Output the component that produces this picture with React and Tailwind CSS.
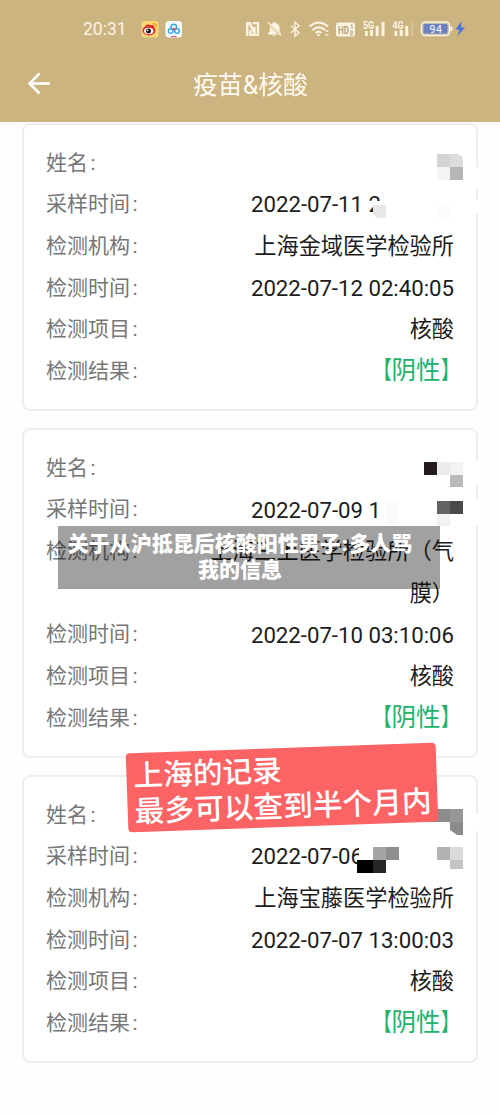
import React from 'react';

const CJK = "font-['Roboto','Noto_Sans_CJK_SC',sans-serif]";

function StatusIcons() {
  return (
    <svg className="absolute left-0 top-0" width="500" height="60" viewBox="0 0 500 60">
      {/* weibo */}
      <rect x="141.500" y="21" width="17" height="16.500" rx="3.500" fill="#fbd774" />
      <ellipse cx="149" cy="30.500" rx="6.500" ry="5" fill="#d9302c" />
      <path d="M146 26.500q2-2 4 0q3-1.500 3.500 1" fill="none" stroke="#d9302c" strokeWidth="2" />
      <ellipse cx="148.700" cy="31" rx="4.600" ry="3.300" fill="#fff" />
      <circle cx="148.500" cy="31" r="2.500" fill="#1d1714" />
      <circle cx="147.700" cy="30.400" r=".8" fill="#fff" />
      <path d="M152.500 23.500q4 0 3.800 4" fill="none" stroke="#f5a52a" strokeWidth="1.500" />
      {/* netdisk */}
      <rect x="165.500" y="21" width="16.500" height="16.500" rx="3.500" fill="#fafdff" />
      <circle cx="173.800" cy="27" r="2.700" fill="none" stroke="#3aa8e0" strokeWidth="1.500" />
      <circle cx="170.700" cy="31" r="2.300" fill="none" stroke="#3aa8e0" strokeWidth="1.500" />
      <circle cx="177" cy="31" r="2.300" fill="none" stroke="#3aa8e0" strokeWidth="1.500" />
      <path d="M172.500 29.800l1.300-1.300 1.300 1.300" fill="none" stroke="#e7526a" strokeWidth="1.500" />
      <path d="M171 37q2.700-1.500 5.500 0" fill="none" stroke="#c45a86" strokeWidth="1.200" />
      {/* nfc */}
      <path d="M247.200 36v-12.800h2.600l4.600 10.300v-6.500" fill="none" stroke="#faf3e2" strokeWidth="2.500" />
      <path d="M250.300 30v4.800h7.700v-11.600h-5.500" fill="none" stroke="#faf3e2" strokeWidth="2.300" />
      <g fill="#faf3e2">
        {/* muted bell */}
        <path d="M274.500 22q1.400 0 1.400 1.300q3.600 1 3.800 5.200v3l1.500 2h-.7l-9.500-9.300q1-.7 2-.9q0-1.300 1.500-1.300z" />
        <path d="M270 26.500l8 8h-10v-1.300l1.700-1.700v-3.500z" />
        <path d="M272.300 35.200h3.500q-1.700 2-3.500 0z" />
      </g>
      <path d="M268 22.500l13 13" stroke="#faf3e2" strokeWidth="1.200" />
      <path d="M291 25.500l8 7.200-4 3.500v-14l4 3.500-8 7" fill="none" stroke="#faf3e2" strokeWidth="1.400" />
      {/* wifi */}
      <g fill="none" stroke="#faf3e2" strokeWidth="2.100">
        <path d="M309.500 26.500q9.300-8 18.600 0" />
        <path d="M312.500 30q6.300-5.200 12.600 0" />
        <path d="M315.500 33q3.300-2.600 6 0" />
      </g>
      <circle cx="318.600" cy="35" r="1.300" fill="#faf3e2" />
      <path d="M325.500 31h3M325.500 34.800h3" stroke="#faf3e2" strokeWidth="1.500" />
      {/* hd */}
      <rect x="336" y="22.500" width="19" height="14" rx="2" fill="#faf3e2" />
      <text x="338" y="33.500" fontSize="10.500" fontWeight="700" textLength="11" lengthAdjust="spacingAndGlyphs" fill="#b9a476" className="font-['Roboto']">HD</text>
      <path d="M350.500 25.500l1.500-1v4.500M350 31.200h2.700v1.700h-2.200v2h2.700" fill="none" stroke="#b9a476" strokeWidth=".9" />
      {/* cellular */}
      <g fill="#faf3e2">
        <text x="363" y="28.500" fontSize="10" fontWeight="700" textLength="11" lengthAdjust="spacingAndGlyphs" className="font-['Roboto']">5G</text>
        <text x="392.500" y="28.500" fontSize="10" fontWeight="700" textLength="11" lengthAdjust="spacingAndGlyphs" className="font-['Roboto']">4G</text>
        <rect x="365" y="31" width="2.700" height="5" />
        <rect x="370" y="30" width="3" height="6" />
        <rect x="375.700" y="26" width="3" height="10" />
        <rect x="381.500" y="22" width="3" height="14" />
        <rect x="394.500" y="31" width="2.700" height="5" />
        <rect x="399.700" y="30" width="3" height="6" />
        <rect x="405.300" y="26" width="3" height="10" />
        <rect x="411" y="22" width="2.500" height="14" opacity=".2" />
      </g>
      {/* battery */}
      <rect x="421.500" y="22" width="28" height="13.500" rx="3.500" fill="#c3bdae" stroke="#faf3e2" strokeWidth="1.500" />
      <rect x="423.500" y="24" width="24" height="9.500" rx="1.500" fill="#6c81bd" />
      <path d="M451.300 26.500v4.500" stroke="#faf3e2" strokeWidth="2" />
      <text x="435.700" y="32.600" textAnchor="middle" fontSize="10.500" textLength="12.500" fill="#fff" className="font-['Roboto']">94</text>
      <path d="M461.500 21.500l-6 8h4l-2 6.500 7.500-8.500h-4z" fill="#4470dc" />
    </svg>
  );
}

function Row({ label, value, masked }) {
  return (
    <div className="flex h-[41.7px] items-center justify-between whitespace-nowrap">
      <span className="text-[21px] text-[#777]">
        {label}
        <span className="ml-[2.500px]">:</span>
      </span>
      {value && (
        <span
          className={
            masked ? 'w-[203px] text-left text-[22.200px] text-[#1c1c1c]' : 'text-[22.200px] text-[#1c1c1c]'
          }
        >
          {value}
        </span>
      )}
    </div>
  );
}

function ResultRow() {
  return (
    <div className="flex h-[41.7px] items-center justify-between whitespace-nowrap">
      <span className="text-[21px] text-[#777]">
        检测结果<span className="ml-[2.500px]">:</span>
      </span>
      <span className="mr-[-11px] flex text-[24.500px] text-[#20b26b]">
        <span className="origin-right scale-x-75">【</span>
        <span>阴性</span>
        <span className="origin-left scale-x-75">】</span>
      </span>
    </div>
  );
}

function Card({ sample, org, orgRest, time }) {
  return (
    <section className="rounded-[8px] border-2 border-[#eeeeee] bg-white pt-[17.500px] pr-[22px] pb-[16.500px] pl-[22px]">
      <Row label="姓名" />
      <Row label="采样时间" value={sample} masked />
      <Row label="检测机构" value={org} />
      {orgRest && (
        <div className="flex h-[41.7px] items-center justify-end text-[22.200px] text-[#1c1c1c]">{orgRest}</div>
      )}
      <Row label="检测时间" value={time} />
      <Row label="检测项目" value="核酸" />
      <ResultRow />
    </section>
  );
}

function Mosaic() {
  return (
    <svg className="absolute left-0 top-0" width="500" height="1116" viewBox="0 0 500 1116">
      <g fill="#fff">
        <rect x="474" y="167" width="8" height="21" />
        <rect x="474" y="200" width="8" height="14" />
        <path d="M380 190h30v28h-37v-13l4-4h3z" />
        <rect x="474" y="461" width="8" height="24" />
        <rect x="474" y="499" width="8" height="27" />
        <rect x="474" y="814" width="8" height="17" />
        <rect x="359" y="845" width="60" height="28" />
      </g>
      <path d="M437 154h13v13h-13z" fill="#d4d3d5" />
      <path d="M450 154h7q6 1 6 6v7h-13z" fill="#dddcde" />
      <path d="M437 167h13v13h-8q-5-1-5-5z" fill="#f5f3f5" />
      <path d="M450 167h13v13h-13z" fill="#b7b5b8" />
      <path d="M373 205h13v13h-8q-4-1-5-5z" fill="#e7e7e7" />
      <path d="M438 206h12v12h-12z" fill="#fafbfa" />
      <path d="M424 462h13v13h-13z" fill="#231b1f" />
      <path d="M437 462h13v13h-13z" fill="#ececec" />
      <path d="M450 462h13v13h-13z" fill="#f1f4f2" />
      <path d="M450 475h13v12h-13z" fill="#b9b9bb" />
      <path d="M437 501h13v13h-13z" fill="#636363" />
      <path d="M450 501h13v13h-13z" fill="#4a4a4a" />
      <path d="M437 514h13v12h-13z" fill="#f0f3f0" />
      <path d="M387 502h11v22h-11z" fill="#fafafa" />
      <path d="M428 809h22v13h-22z" fill="#8c8c8c" />
      <path d="M450 809h13v13h-13z" fill="#979797" />
      <path d="M450 822h13v13h-6l-7-5z" fill="#8b8b8b" />
      <path d="M373 847h13v13h-13z" fill="#a5a5a5" />
      <path d="M386 847h13v13h-13z" fill="#8e8e8e" />
      <path d="M357 860h16v13h-16z" fill="#000" />
      <path d="M373 860h13v13h-13z" fill="#262626" />
      <path d="M437 847h13v13h-13z" fill="#b2b2b2" />
      <path d="M450 847h13v13h-13z" fill="#dadada" />
      <path d="M450 860h13v9h-13z" fill="#c4c4c4" />
    </svg>
  );
}

export default function App() {
  return (
    <div className={`relative h-[1116px] w-[500px] overflow-hidden bg-[#fefefe] ${CJK}`}>
      <header className="relative flex h-[122px] flex-col bg-[#ccb480] text-[#fffaf0]">
        <div className="flex h-[58px] items-center pl-[83px] text-[17.500px] text-[#faf3e2]">20:31</div>
        <StatusIcons />
        <div className="relative flex h-[55px] items-center justify-center">
          <svg className="absolute left-[26px] top-[14px]" width="24" height="24" viewBox="0 0 24 24" fill="none" stroke="#fff" strokeWidth="2.600">
            <path d="M24 11.500H3M13.500 1.500l-10 10 10 10" />
          </svg>
          <h1 className="pl-px text-[24.900px] font-normal">疫苗&amp;核酸</h1>
        </div>
      </header>
      <main className="flex flex-col gap-[17px] px-[22px] pt-px">
        <Card sample="2022-07-11 2" org="上海金域医学检验所" time="2022-07-12 02:40:05" />
        <Card sample="2022-07-09 1" org="上海三上医学检验所（气" orgRest="膜）" time="2022-07-10 03:10:06" />
        <Card sample="2022-07-06" org="上海宝藤医学检验所" time="2022-07-07 13:00:03" />
      </main>
      <Mosaic />
      <div className="absolute left-[127px] top-[748px] flex h-[79px] w-[310px] rotate-[-2deg] flex-col rounded-[4px] bg-[#fb6062]/98 pl-[7px] pt-[5px] text-[29.700px] leading-[36px] font-medium whitespace-nowrap text-white">
        <span>上海的记录</span>
        <span>最多可以查到半个月内</span>
      </div>
      <div className="absolute left-[58px] top-[526px] h-[63px] w-[382px] bg-black/37 pr-[18px] pt-[5px] text-center text-[21px] leading-[26px] font-black whitespace-nowrap text-white">
        关于从沪抵昆后核酸阳性男子<span className="mx-[1px]">:</span>多人骂
        <br />
        我的信息
      </div>
    </div>
  );
}
